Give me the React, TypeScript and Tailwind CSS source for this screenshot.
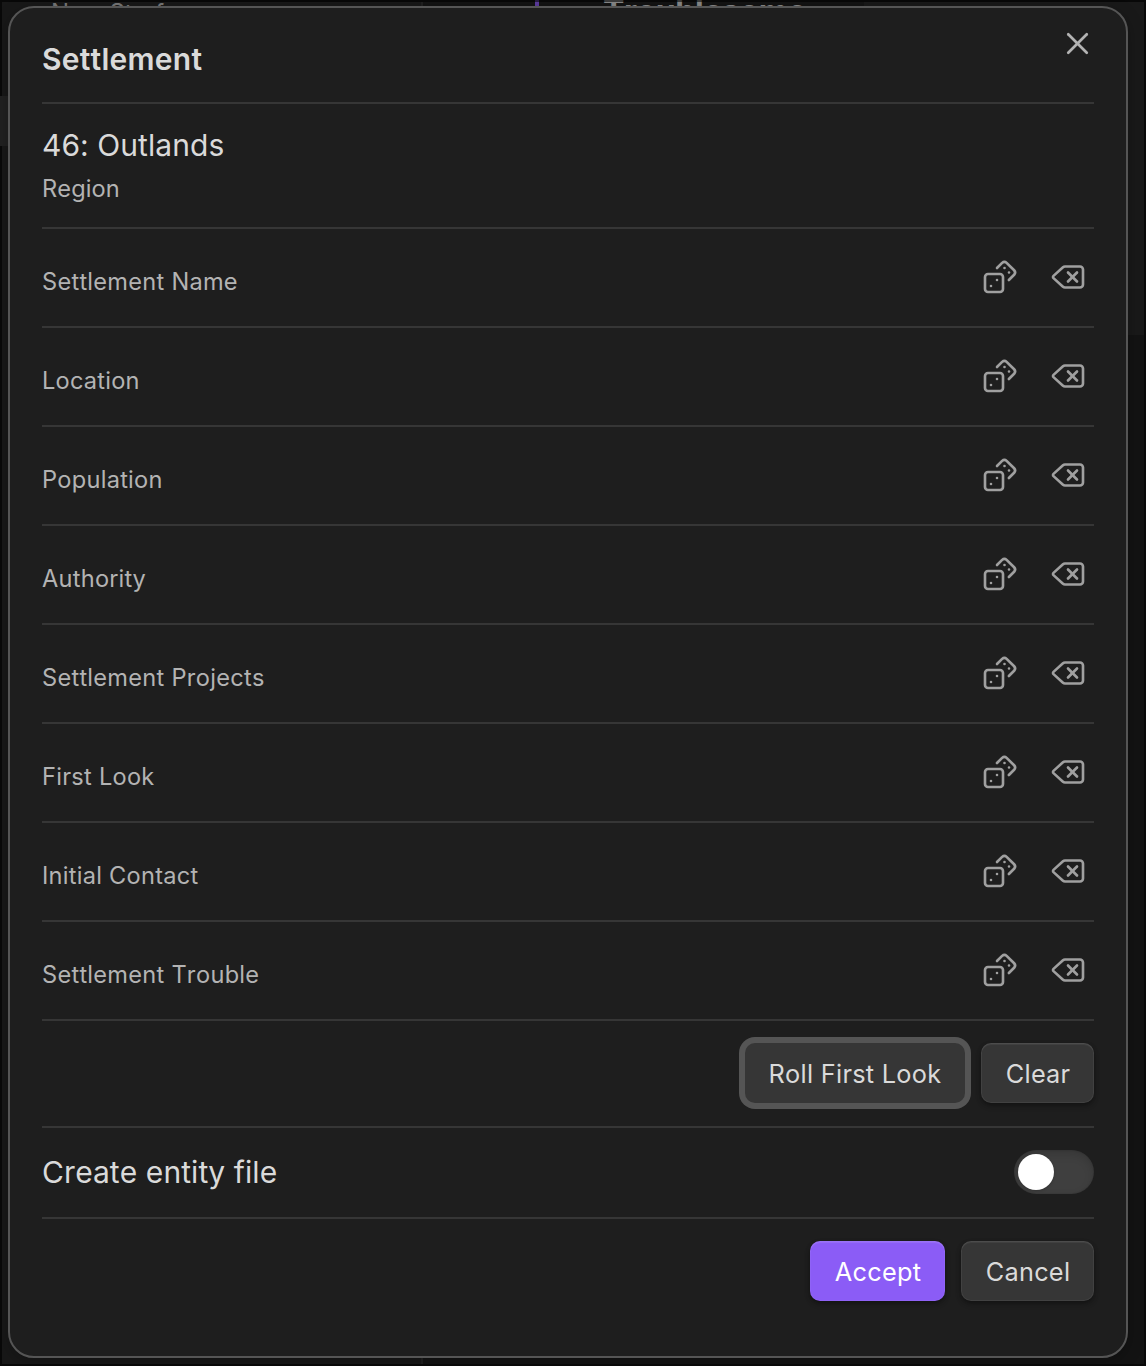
import { Delete, X } from "lucide-react";

const fields = [
  "Settlement Name",
  "Location",
  "Population",
  "Authority",
  "Settlement Projects",
  "First Look",
  "Initial Contact",
  "Settlement Trouble",
];

function RollIcon() {
  return (
    <svg width="36" height="36" viewBox="0 0 24 24" fill="none" stroke="currentColor" strokeWidth="1.75" strokeLinecap="round" strokeLinejoin="round">
      <rect width="12" height="12" x="2" y="10" rx="2" ry="2" />
      <path d="m17.92 14 3.5-3.5a2.24 2.24 0 0 0 0-3l-5-4.92a2.24 2.24 0 0 0-3 0L10 6" />
      <path d="M6 18h.01M10 14h.01M15 6h.01M18 9h.01" />
    </svg>
  );
}

function FieldRow({ label }: { label: string }) {
  return (
    <div className="flex h-[99px] items-start justify-between border-t-2 border-[#363636]">
      <span className="mt-[35px] text-[23.6px] leading-9 tracking-[0.26px] text-[#b3b3b3]">{label}</span>
      <div className="mr-2 mt-[30px] flex gap-8 text-[#a0a0a0]">
        <button><RollIcon /></button>
        <button><Delete size={36} strokeWidth={1.75} /></button>
      </div>
    </div>
  );
}

const buttonBase = "h-[60px] rounded-[10px] pt-0.5 text-[25.3px] leading-8 tracking-[0.28px]";
const raised =
  "bg-[#363636] shadow-[inset_0_2px_1px_0_rgba(255,255,255,0.06),inset_0_0_0_1px_rgba(255,255,255,0.06),0_2px_4px_0_rgba(0,0,0,0.3),0_3px_6px_0_rgba(0,0,0,0.15)]";

function Backdrop() {
  return (
    <div className="absolute inset-0 overflow-hidden bg-[#090909]">
      <div className="absolute bottom-[2px] left-[2px] top-[2px] w-[420px] bg-[#181818]" />
      <div className="absolute bottom-[2px] left-[421px] top-[2px] w-[2px] bg-[#202020]" />
      <div className="absolute bottom-[2px] left-[423px] right-[2px] top-[2px] bg-[#131313]" />
      <div className="absolute left-0 top-24 h-[50px] w-4 bg-[#212121]" />
      <div className="absolute right-[2px] top-[2px] h-[333px] w-[280px] bg-[#191919]" />
      <div className="absolute left-[51px] top-[-1px] text-[24px] leading-7 text-[#777]">New Starf</div>
      <div className="absolute left-[535px] top-0 h-2 w-1 bg-[#5b3a9f]" />
      <div className="absolute left-[603px] top-[-4px] text-[32px] font-bold leading-8 tracking-[-0.4px] text-[#888]">Troublesome</div>
      <div className="absolute inset-x-0 top-0 h-[2px] bg-[#090909]/60" />
    </div>
  );
}

export default function App() {
  return (
    <div className="relative h-[1366px] w-[1146px] overflow-hidden pl-2 pt-1.5 font-['Inter',sans-serif] text-[#dadada] [font-kerning:none]">
      <Backdrop />
      <main className="relative h-[1352px] w-[1120px] rounded-[26px] border-2 border-[#555] bg-[#1e1e1e] px-8 shadow-[0_4px_16px_rgba(0,0,0,0.25)]">
        <button className="absolute right-[30px] top-[17px] text-[#b3b3b3]"><X size={37} strokeWidth={1.75} /></button>
        <header className="flex h-[94px] items-start">
          <h1 className="mt-[31px] text-[30px] font-semibold leading-10 tracking-[0.25px]">Settlement</h1>
        </header>
        <section className="h-[125px] border-t-2 border-[#363636] pt-[21px]">
          <h2 className="text-[30px] leading-10 tracking-[0.06px]">46: Outlands</h2>
          <p className="mt-[6px] text-[23.6px] leading-9 tracking-[0.1px] text-[#b3b3b3]">Region</p>
        </section>
        {fields.map((label) => <FieldRow key={label} label={label} />)}
        <div className="flex h-[107px] justify-end gap-4 border-t-2 border-[#363636] pt-[22px]">
          <button className={`${buttonBase} w-[220px] bg-[#363636] shadow-[0_0_0_6px_#555]`}>Roll First Look</button>
          <button className={`${buttonBase} ${raised} w-[113px] pl-px`}>Clear</button>
        </div>
        <div className="flex h-[91px] items-start justify-between border-t-2 border-[#363636]">
          <span className="mt-[24px] text-[30px] leading-10 tracking-[0.08px]">Create entity file</span>
          <button role="switch" aria-checked="false" className="mt-[22px] h-11 w-20 rounded-full bg-[#3f3f3f] p-1 shadow-[inset_0_4px_10px_rgba(0,0,0,0.14),inset_0_0_2px_rgba(0,0,0,0.2)]">
            <span className="block size-9 rounded-full bg-white shadow-[0_1px_3px_rgba(0,0,0,0.2)]" />
          </button>
        </div>
        <footer className="flex justify-end gap-4 border-t-2 border-[#363636] pt-[22px]">
          <button className={`${buttonBase} w-[135px] bg-[#8b5cf6] pl-px text-white shadow-[inset_0_2px_1px_0_rgba(255,255,255,0.1),inset_0_0_0_1px_rgba(255,255,255,0.04),0_2px_4px_0_rgba(0,0,0,0.3),0_3px_6px_0_rgba(0,0,0,0.15)]`}>Accept</button>
          <button className={`${buttonBase} ${raised} w-[133px] pl-px`}>Cancel</button>
        </footer>
      </main>
    </div>
  );
}
